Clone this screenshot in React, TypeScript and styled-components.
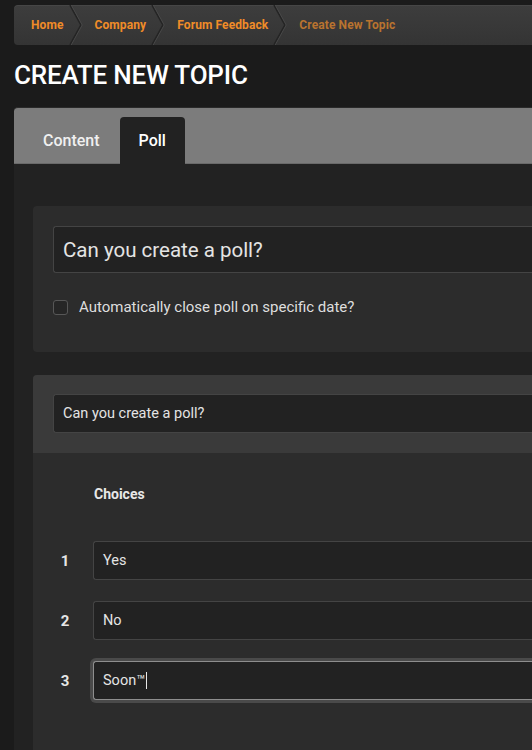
import React from "react";
import styled, { createGlobalStyle } from "styled-components";

const Global = createGlobalStyle`
  html, body { margin: 0; padding: 0; background: #1b1b1b; overflow: hidden; }
  body { font-family: Roboto, "Liberation Sans", Arial, sans-serif; color: #e2e2e2; }
  * { box-sizing: border-box; }
`;

const Page = styled.div`
  width: 580px;
  padding: 5px 0 40px 14px;
`;

const Breadcrumb = styled.nav`
  display: flex;
  align-items: center;
  height: 40px;
  border-radius: 4px 0 0 4px;
  background: linear-gradient(#3d3d3d, #343434);
  box-shadow: inset 0 1px 0 rgba(255, 255, 255, 0.05);
  padding-left: 17px;
`;

const Crumb = styled.a<{ $current?: boolean }>`
  font-size: 12px;
  font-weight: 700;
  letter-spacing: 0.1px;
  color: ${(p) => (p.$current ? "#b9732f" : "#f08c28")};
  text-decoration: none;
`;

const Sep = styled.svg`
  width: 14px;
  height: 40px;
  margin: 0 12px 0 5px;
  flex: none;
`;

const Chevron = () => (
  <Sep viewBox="0 0 14 40">
    <polyline points="1,0 12,20 1,40" fill="none" stroke="#242424" strokeWidth="1.6" />
    <polyline points="2.2,0 13.2,20 2.2,40" fill="none" stroke="#4e4e4e" strokeWidth="0.8" />
  </Sep>
);

const Title = styled.h1`
  margin: 14px 0 0;
  font-size: 26px;
  line-height: 32px;
  font-weight: 500;
  color: #ffffff;
  letter-spacing: -0.2px;
`;

const TabBar = styled.div`
  margin-top: 16px;
  display: flex;
  align-items: flex-end;
  height: 57px;
  background: #7c7c7c;
  border-top: 1px solid #2a2a2a;
  border-bottom: 1px solid #6a6a6a;
  border-radius: 4px 0 0 0;
  padding-left: 14px;
  gap: 5px;
`;

const Tab = styled.div<{ $active?: boolean }>`
  height: 47px;
  padding: 0 ${(p) => (p.$active ? "19px" : "15px")};
  margin-bottom: -1px;
  display: flex;
  align-items: center;
  font-size: 16px;
  font-weight: 500;
  color: ${(p) => (p.$active ? "#ffffff" : "#f0f0f0")};
  background: ${(p) => (p.$active ? "#222222" : "transparent")};
  border-radius: 4px 4px 0 0;
`;

const Panel = styled.div`
  background: #222222;
  padding: 42px 0 0 19px;
  display: flex;
  flex-direction: column;
  gap: 23px;
`;

const Card = styled.section`
  background: #2c2c2c;
  border-radius: 4px 0 0 4px;
  overflow: hidden;
`;

const CardBody = styled.div`
  padding: 20px 0 36px 20px;
  display: flex;
  flex-direction: column;
  gap: 25px;
`;

const Field = styled.div<{ $size: "lg" | "md"; $focus?: boolean }>`
  display: flex;
  align-items: center;
  height: ${(p) => (p.$size === "lg" ? "47px" : "39px")};
  padding-left: 9px;
  background: #222222;
  border: 1px solid ${(p) => (p.$focus ? "#8e8e8e" : "#444444")};
  border-right: none;
  border-radius: 3px 0 0 3px;
  font-size: ${(p) => (p.$size === "lg" ? "20.5px" : "14.5px")};
  color: #e4e4e4;
  box-shadow: ${(p) => (p.$focus ? "0 0 0 3px #4a4a4a" : "none")};
`;

const Caret = styled.span`
  display: inline-block;
  width: 1px;
  height: 17px;
  background: #e8e8e8;
  margin-left: 1px;
`;

const CheckRow = styled.label`
  display: flex;
  align-items: center;
  gap: 11px;
  font-size: 15px;
  color: #dedede;
`;

const Checkbox = styled.span`
  width: 15px;
  height: 15px;
  border: 1px solid #575757;
  border-radius: 3px;
  background: #262626;
`;

const CardHeader = styled.div`
  background: #3a3a3a;
  padding: 19px 0 20px 20px;
`;

const ChoicesBody = styled.div`
  padding: 31px 0 60px 20px;
  display: grid;
  grid-template-columns: 24px 1fr;
  column-gap: 16px;
  row-gap: 21px;
  align-items: center;
`;

const ChoicesLabel = styled.div`
  grid-column: 2;
  font-size: 14px;
  font-weight: 700;
  line-height: 20px;
  color: #e8e8e8;
  margin-bottom: 16px;
  margin-left: 1px;
`;

const Num = styled.div`
  text-align: center;
  font-size: 15px;
  font-weight: 700;
  color: #e6e6e6;
`;

const crumbs = ["Home", "Company", "Forum Feedback"];
const choices = ["Yes", "No", "Soon™"];

export default function App() {
  return (
    <>
      <Global />
      <Page>
        <Breadcrumb>
          {crumbs.map((c) => (
            <React.Fragment key={c}>
              <Crumb href="#">{c}</Crumb>
              <Chevron />
            </React.Fragment>
          ))}
          <Crumb $current>Create New Topic</Crumb>
        </Breadcrumb>
        <Title>CREATE NEW TOPIC</Title>
        <TabBar>
          <Tab>Content</Tab>
          <Tab $active>Poll</Tab>
        </TabBar>
        <Panel>
          <Card>
            <CardBody>
              <Field $size="lg">Can you create a poll?</Field>
              <CheckRow>
                <Checkbox />
                Automatically close poll on specific date?
              </CheckRow>
            </CardBody>
          </Card>
          <Card>
            <CardHeader>
              <Field $size="md">Can you create a poll?</Field>
            </CardHeader>
            <ChoicesBody>
              <ChoicesLabel>Choices</ChoicesLabel>
              {choices.map((c, i) => {
                const focus = i === choices.length - 1;
                return (
                  <React.Fragment key={c}>
                    <Num>{i + 1}</Num>
                    <Field $size="md" $focus={focus}>
                      {c}
                      {focus && <Caret />}
                    </Field>
                  </React.Fragment>
                );
              })}
            </ChoicesBody>
          </Card>
        </Panel>
      </Page>
    </>
  );
}
